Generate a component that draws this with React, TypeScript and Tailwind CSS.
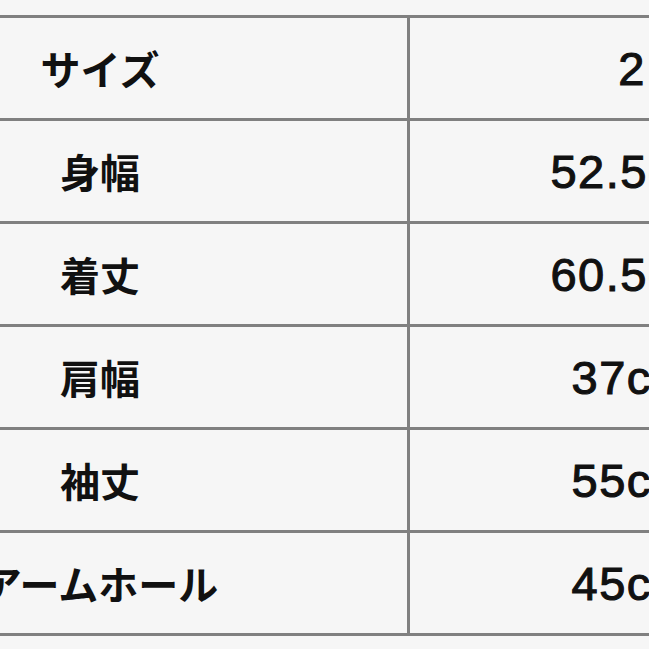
const rows = [
  { label: 'サイズ', value: '2' },
  { label: '身幅', value: '52.5cm' },
  { label: '着丈', value: '60.5cm' },
  { label: '肩幅', value: '37cm' },
  { label: '袖丈', value: '55cm' },
  { label: 'アームホール', value: '45cm' },
]

export default function App() {
  return (
    <div
      className="w-[649px] h-[649px] overflow-hidden bg-[#f6f6f6] pt-[15px] text-[#111]"
      style={{ fontFamily: '"Noto Sans CJK JP", "Liberation Sans", sans-serif' }}
    >
      <div className="ml-[-207px] w-[1061px] border-b-[3px] border-[#808080]">
        {rows.map((r) => (
          <div key={r.label} className="flex h-[103px] border-t-[3px] border-[#808080]">
            <div className="w-[617px] shrink-0 border-r-[3px] border-[#808080] flex items-center justify-center text-[40px] font-bold">
              {r.label}
            </div>
            <div className="w-[444px] shrink-0 flex items-center justify-center pt-[2px] font-['Liberation_Sans',sans-serif] text-[47px] tracking-[1.5px] [-webkit-text-stroke:1.1px_#111]">
              {r.value}
            </div>
          </div>
        ))}
      </div>
    </div>
  )
}
